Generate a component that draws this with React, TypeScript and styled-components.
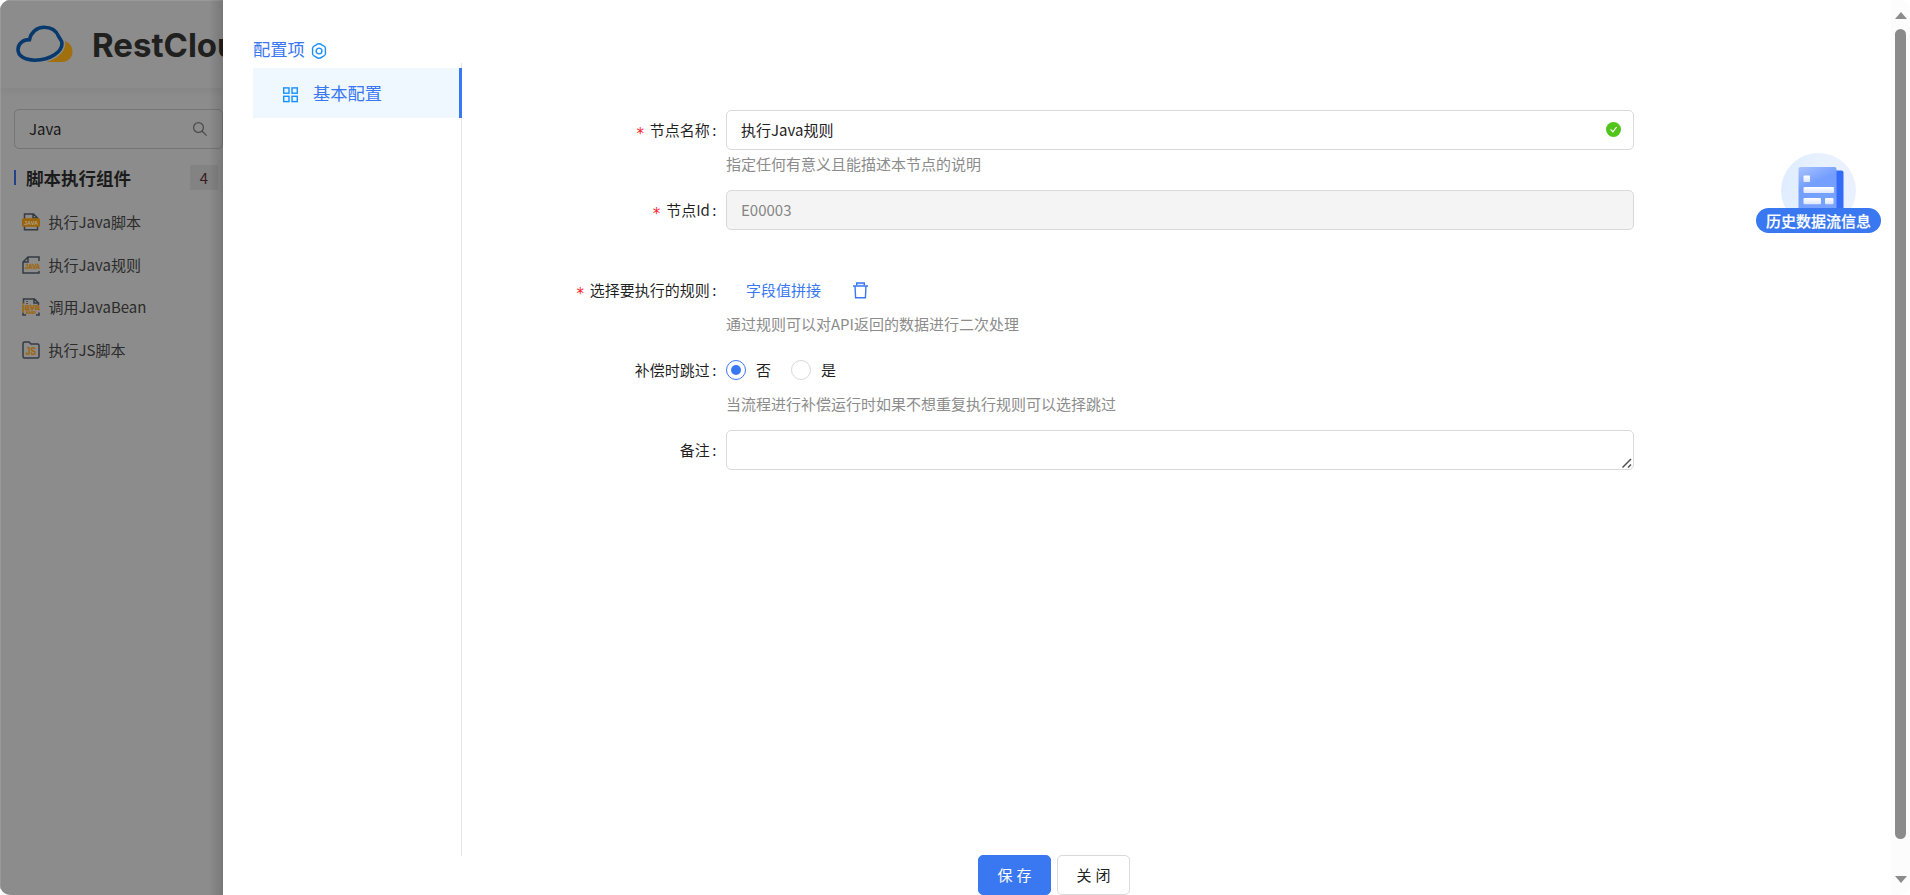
import React from 'react';
import styled, { createGlobalStyle, css } from 'styled-components';

const Global = createGlobalStyle`
  *, *::before, *::after { box-sizing: border-box; }
  body {
    margin: 0;
    overflow: hidden;
    background: #fff;
    font-family: "Noto Sans CJK SC", "Noto Sans", sans-serif;
    font-size: 15px;
    line-height: 22px;
    color: rgba(0, 0, 0, 0.88);
  }
  input, textarea, button { font: inherit; color: inherit; }
  svg { flex: none; }
`;

const Page = styled.div`
  display: flex;
  width: 1910px;
  height: 895px;
  border-radius: 10px;
  overflow: hidden;
`;

const Sidebar = styled.aside`
  position: relative;
  flex: 0 0 223px;
  overflow: hidden;
  background: #8c8c8c;
  box-shadow: inset 1px 0 0 #999, inset 0 1px 0 #999;
  &::after {
    content: '';
    position: absolute;
    inset: 0 0 0 auto;
    width: 14px;
    background: linear-gradient(to right, rgba(0, 0, 0, 0), rgba(0, 0, 0, 0.15));
  }
`;

const Brand = styled.header`
  display: flex;
  align-items: center;
  height: 88px;
  padding-left: 16px;
  box-shadow: 0 2px 8px rgba(0, 0, 0, 0.06);
  svg { margin-top: 1px; }
`;

const LogoText = styled.span`
  flex: 1;
  min-width: 0;
  margin: 2px 0 0 18px;
  overflow: hidden;
  font-family: Inter, sans-serif;
  font-size: 33px;
  font-weight: 700;
  line-height: 40px;
  color: #20201f;
  white-space: nowrap;
`;

const SearchBox = styled.label`
  display: flex;
  align-items: center;
  width: 209px;
  height: 40px;
  margin: 21px 0 0 14px;
  padding: 0 15px 0 14px;
  border: 1px solid #757575;
  border-radius: 5px;
`;

const SearchInput = styled.input`
  flex: 1;
  min-width: 0;
  padding: 0;
  border: 0;
  outline: 0;
  background: transparent;
  color: #161616;
`;

const GroupHeading = styled.div`
  display: flex;
  align-items: center;
  margin: 16px 5px 0 14px;
  height: 25px;
`;

const GroupBar = styled.span`
  width: 2px;
  height: 15px;
  background: #21438a;
`;

const GroupTitle = styled.strong`
  flex: 1;
  margin-left: 10px;
  font-size: 17.5px;
  line-height: 25px;
  color: #1b1b1b;
`;

const Count = styled.span`
  width: 28px;
  height: 25px;
  background: #838383;
  color: #371c1c;
  line-height: 26px;
  text-align: center;
`;

const ComponentList = styled.ul`
  display: grid;
  grid-auto-rows: 42.6px;
  margin: 11px 0 0;
  padding: 0 0 0 22px;
  list-style: none;
`;

const ComponentItem = styled.li`
  display: flex;
  align-items: center;
  gap: 8.5px;
  color: #2b2b2b;
  white-space: nowrap;
`;

const Drawer = styled.main`
  display: flex;
  flex-direction: column;
  flex: 1;
  min-width: 0;
  padding-left: 30px;
  background: #fff;
`;

const Columns = styled.div`
  display: flex;
  flex: 0 0 855px;
`;

const Nav = styled.nav`
  display: flex;
  flex-direction: column;
  width: 209px;
  padding-top: 36px;
  margin-bottom: -1px;
`;

const NavTitle = styled.div`
  display: flex;
  align-items: center;
  gap: 6px;
  height: 27px;
  padding-bottom: 2px;
  font-size: 17.3px;
  color: #3a78f2;
  svg { margin-top: 4px; }
`;

const NavBody = styled.div`
  flex: 1;
  padding-top: 5px;
  border-right: 1px solid #e4e4e4;
`;

const NavItem = styled.div`
  display: flex;
  align-items: center;
  gap: 14px;
  height: 50px;
  margin-right: -1px;
  padding-left: 29px;
  border-right: 3px solid #3a78f2;
  background: #eff7ff;
  color: #3a78f2;
  font-size: 17.3px;
  svg { margin-top: 3px; }
`;

const Form = styled.form`
  width: 1172px;
  padding-top: 110px;
`;

const Field = styled.div<{ $gap?: number }>`
  display: grid;
  grid-template-columns: 264px 908px;
  margin-bottom: ${(p) => p.$gap ?? 0}px;
`;

const Label = styled.label<{ $required?: boolean }>`
  display: flex;
  align-items: center;
  justify-content: flex-end;
  height: 40px;
  padding-right: 9.5px;
  ${(p) => p.$required && css`
    &::before {
      content: '*';
      margin: 8px 5px 0 0;
      color: #f5222d;
      font-family: "DejaVu Sans Mono", monospace;
    }
  `}
  &::after {
    content: ':';
    margin-left: 2.5px;
  }
`;

const control = css`
  width: 100%;
  height: 40px;
  border: 1px solid #d9d9d9;
  border-radius: 5px;
`;

const InputFrame = styled.div<{ $disabled?: boolean }>`
  ${control}
  display: flex;
  align-items: center;
  padding: 0 12px 0 14px;
  background: ${(p) => (p.$disabled ? '#f4f4f4' : '#fff')};
  color: ${(p) => (p.$disabled ? '#858585' : '#222')};
  svg { margin-bottom: 1px; }
`;

const TextInput = styled.input`
  flex: 1;
  padding: 0;
  border: 0;
  outline: 0;
  background: transparent;
`;

const TextAreaFrame = styled.div`
  position: relative;
  svg {
    position: absolute;
    right: 2px;
    bottom: 2px;
  }
`;

const TextArea = styled.textarea`
  ${control}
  display: block;
  padding: 8px 14px;
  outline: 0;
  resize: none;
  overflow: hidden;
`;

const Hint = styled.p`
  height: 28px;
  margin: 0;
  padding-top: 3px;
  line-height: 22px;
  color: #8c8c8c;
`;

const RuleRow = styled.div`
  display: flex;
  align-items: center;
  gap: 32px;
  height: 40px;
  padding-left: 20px;
  color: #3a78f2;
`;

const Radios = styled.div`
  display: flex;
  align-items: center;
  gap: 20px;
  height: 40px;
`;

const Radio = styled.span`
  display: flex;
  align-items: center;
  gap: 10px;
`;

const Dot = styled.span<{ $on?: boolean }>`
  display: grid;
  place-items: center;
  width: 20px;
  height: 20px;
  border: 1px solid ${(p) => (p.$on ? '#3a78f2' : '#d9d9d9')};
  border-radius: 50%;
  &::after {
    content: '';
    width: 10px;
    height: 10px;
    border-radius: 50%;
    background: ${(p) => (p.$on ? '#3a78f2' : 'transparent')};
  }
`;

const Footer = styled.footer`
  display: flex;
  gap: 6px;
  padding-left: 725px;
`;

const Button = styled.button<{ $primary?: boolean }>`
  width: 73px;
  height: 40px;
  padding: 0 0 0 4px;
  border: 1px solid ${(p) => (p.$primary ? '#3a78f2' : '#d9d9d9')};
  border-radius: 5px;
  background: ${(p) => (p.$primary ? '#3a78f2' : '#fff')};
  color: ${(p) => (p.$primary ? '#fff' : '#222')};
  letter-spacing: 4px;
`;

const HistoryButton = styled.div`
  position: absolute;
  top: 153px;
  left: 1756px;
  display: flex;
  flex-direction: column;
  align-items: center;
  width: 125px;
`;

const HistoryLabel = styled.span`
  width: 125px;
  height: 25px;
  margin-top: -20px;
  border-radius: 13px;
  background: #3a78f2;
  color: #fff;
  font-weight: 500;
  -webkit-text-stroke: 0.2px #fff;
  line-height: 26px;
  text-align: center;
`;

const ScrollTrack = styled.div`
  display: flex;
  flex-direction: column;
  align-items: center;
  flex: 0 0 19px;
  padding: 12px 0 11px;
  background: #fcfcfc;
`;

const ScrollThumb = styled.div`
  width: 11px;
  height: 810px;
  margin: 10px 0 37px;
  border-radius: 6px;
  background: #8b8b8b;
`;

const ScrollArrow = styled.span<{ $down?: boolean }>`
  border: solid transparent;
  border-width: 0 6.5px 7px;
  border-bottom-color: #8b8b8b;
  transform: ${(p) => (p.$down ? 'rotate(180deg)' : 'none')};
`;

const Logo = () => (
  <svg width="58" height="40" viewBox="0 0 58 40">
    <path d="M30 37h16c6 0 10.500-4.500 10.500-10.500S52.500 16.500 47 16c1 8-7 17-17 21z" fill="#a0700f" />
    <path d="M19 35.200C8 35.200 2 30.500 2 24.500 2 18.500 7 14.600 13.500 14.600 15 7 21 2.200 28 2.200c8 0 12.500 4 14.600 9.200.8 2 3.400 4 3.400 7 0 8-11 16.800-27 16.800z" fill="#8c8c8c" stroke="#8c8c8c" strokeWidth="6.500" />
    <path d="M19 35.200C8 35.200 2 30.500 2 24.500 2 18.500 7 14.600 13.500 14.600 15 7 21 2.200 28 2.200c8 0 12.500 4 14.600 9.200.8 2 3.400 4 3.400 7 0 8-11 16.800-27 16.800z" fill="#8c8c8c" stroke="#07396d" strokeWidth="3.600" />
  </svg>
);

const SearchIcon = () => (
  <svg width="14" height="14" viewBox="0 0 14 14" fill="none" stroke="#4b4b4b" strokeWidth="1.200">
    <circle cx="5.500" cy="5.500" r="4.900" />
    <path d="M9 9l4.600 4.600" />
  </svg>
);

type Kind = 'script' | 'rule' | 'bean' | 'js';

const FileIcon = ({ kind }: { kind: Kind }) => (
  <svg width="18" height="18" viewBox="0 0 18 18" fill="none" stroke="#333b43" strokeWidth="1.500" fontFamily="Liberation Sans, sans-serif" fontWeight="700">
    {kind === 'script' && (
      <>
        <path d="M2.500 6V1h9L15.500 5v1M2.500 13v3.700h13V13M11 1v4h4" />
        <rect x="0" y="5.200" width="18" height="8.600" rx="1.500" fill="#9c6408" stroke="none" />
        <text x="2" y="11.800" fontSize="6" textLength="14" lengthAdjust="spacingAndGlyphs" fill="#aaa08e" stroke="none">JAVA</text>
      </>
    )}
    {kind === 'rule' && (
      <>
        <path d="M17 5V1H6L1 6v11h16v-2M6 1v5H1" />
        <text x="3" y="12.900" fontSize="6.500" textLength="15" lengthAdjust="spacingAndGlyphs" fill="#a0660a" stroke="#a0660a" strokeWidth=".3">JAVA</text>
      </>
    )}
    {kind === 'bean' && (
      <>
        <path d="M1.500 6V1h11l4 4v2M12 1v4h4.500M1 14.500V17h3M14 17h3v-2.500" />
        <path d="M5 3v4" strokeDasharray="1 1" />
        <text x="0" y="11.700" fontSize="9" textLength="18" lengthAdjust="spacingAndGlyphs" fill="#a0660a" stroke="#a0660a" strokeWidth=".4">java</text>
        <text x="4" y="16" fontSize="4.500" textLength="10" lengthAdjust="spacingAndGlyphs" fill="#a0660a" stroke="#a0660a" strokeWidth=".2">Bean</text>
      </>
    )}
    {kind === 'js' && (
      <>
        <path d="M1 2.500Q1 1 2.500 1H7l2 2h6.500Q17 3 17 4.500v11Q17 17 15.500 17h-13Q1 17 1 15.500z" />
        <text x="3.800" y="14" fontSize="10.500" textLength="10.200" lengthAdjust="spacingAndGlyphs" fill="#a0660a" stroke="#a0660a" strokeWidth=".2">JS</text>
      </>
    )}
  </svg>
);

const SettingIcon = () => (
  <svg width="16" height="16" viewBox="0 0 16 16" fill="none" stroke="#1890ff" strokeWidth="1.400">
    <path d="M5.200 1.900Q8-.3 10.800 1.900L12.600 2.900Q14.700 3.800 14.500 6.200Q14.300 8 14.500 9.800Q14.700 12.200 12.600 13.100L10.800 14.100Q8 16.300 5.200 14.100L3.400 13.100Q1.300 12.200 1.500 9.800Q1.700 8 1.500 6.200Q1.300 3.800 3.400 2.900z" />
    <circle cx="8" cy="8" r="2.900" />
  </svg>
);

const AppsIcon = () => (
  <svg width="17" height="16" viewBox="0 0 17 16" fill="#e6f7ff" stroke="#1890ff" strokeWidth="1.400">
    <rect x="1.700" y=".9" width="5.300" height="5.300" />
    <rect x="10" y=".9" width="5.300" height="5.300" />
    <rect x="1.700" y="9.300" width="5.300" height="5.300" />
    <rect x="10" y="9.300" width="5.300" height="5.300" />
  </svg>
);

const TrashIcon = () => (
  <svg width="15" height="17" viewBox="0 0 15 17" fill="none" stroke="#3a78f2" strokeWidth="1.400">
    <path d="M3.700 3.500V1h7.600v2.500" fill="#dce8ff" />
    <path d="M0 4h15M2 4l.6 11.800h9.800L13 4" />
  </svg>
);

const CheckIcon = () => (
  <svg width="15" height="15" viewBox="0 0 15 15">
    <circle cx="7.500" cy="7.500" r="7.500" fill="#52c41a" />
    <path d="M4.600 7.400l2.300 2.500 3.700-4.900" fill="none" stroke="#fff" strokeWidth="1.200" />
  </svg>
);

const ResizeGrip = () => (
  <svg width="10" height="10" viewBox="0 0 10 10" fill="none" stroke="#505050" strokeWidth="1.500">
    <path d="M.5 9.500l8.500-8.500M6 9.500l3-3" />
  </svg>
);

const HistoryIcon = () => (
  <svg width="75" height="75" viewBox="0 0 75 75">
    <defs>
      <linearGradient id="halo" x1="0" y1="0" x2="1" y2=".3"><stop offset="0" stopColor="#dcecff" /><stop offset=".6" stopColor="#e9f1ff" /><stop offset="1" stopColor="#ebf0ff" /></linearGradient>
      <linearGradient id="sheet" x1="0" y1="0" x2=".4" y2="1"><stop offset="0" stopColor="#a8c2ff" /><stop offset=".45" stopColor="#739eff" /><stop offset="1" stopColor="#79a3ff" /></linearGradient>
      <linearGradient id="line" x1="0" y1="0" x2="0" y2="1"><stop offset="0" stopColor="#fff" /><stop offset="1" stopColor="#dce6ff" /></linearGradient>
    </defs>
    <circle cx="37.500" cy="37.500" r="37.500" fill="url(#halo)" />
    <rect x="45" y="17.500" width="17.500" height="44" rx="2" fill="#346cf9" />
    <rect x="17.500" y="14" width="38" height="46" rx="2" fill="url(#sheet)" />
    <g fill="url(#line)">
      <rect x="22.500" y="22.500" width="6.500" height="6.500" rx="1" />
      <rect x="22.500" y="34" width="30.500" height="6" rx="1" />
      <rect x="22.500" y="45" width="17.500" height="6.200" rx="1" />
      <rect x="44" y="45" width="8.500" height="6.200" rx="1" />
    </g>
  </svg>
);

const components: { kind: Kind; name: string }[] = [
  { kind: 'script', name: '执行Java脚本' },
  { kind: 'rule', name: '执行Java规则' },
  { kind: 'bean', name: '调用JavaBean' },
  { kind: 'js', name: '执行JS脚本' },
];

export default function App() {
  return (
    <>
      <Global />
      <Page>
        <Sidebar>
          <Brand>
            <Logo />
            <LogoText>RestCloud</LogoText>
          </Brand>
          <SearchBox>
            <SearchInput defaultValue="Java" />
            <SearchIcon />
          </SearchBox>
          <GroupHeading>
            <GroupBar />
            <GroupTitle>脚本执行组件</GroupTitle>
            <Count>4</Count>
          </GroupHeading>
          <ComponentList>
            {components.map((c) => (
              <ComponentItem key={c.kind}>
                <FileIcon kind={c.kind} />
                {c.name}
              </ComponentItem>
            ))}
          </ComponentList>
        </Sidebar>
        <Drawer>
          <Columns>
            <Nav>
              <NavTitle>配置项<SettingIcon /></NavTitle>
              <NavBody>
                <NavItem><AppsIcon />基本配置</NavItem>
              </NavBody>
            </Nav>
            <Form>
              <Field $gap={12}>
                <Label $required>节点名称</Label>
                <div>
                  <InputFrame>
                    <TextInput defaultValue="执行Java规则" />
                    <CheckIcon />
                  </InputFrame>
                  <Hint>指定任何有意义且能描述本节点的说明</Hint>
                </div>
              </Field>
              <Field $gap={40}>
                <Label $required>节点Id</Label>
                <InputFrame $disabled>
                  <TextInput defaultValue="E00003" readOnly />
                </InputFrame>
              </Field>
              <Field $gap={12}>
                <Label $required>选择要执行的规则</Label>
                <div>
                  <RuleRow>字段值拼接<TrashIcon /></RuleRow>
                  <Hint>通过规则可以对API返回的数据进行二次处理</Hint>
                </div>
              </Field>
              <Field $gap={12}>
                <Label>补偿时跳过</Label>
                <div>
                  <Radios>
                    <Radio><Dot $on />否</Radio>
                    <Radio><Dot />是</Radio>
                  </Radios>
                  <Hint>当流程进行补偿运行时如果不想重复执行规则可以选择跳过</Hint>
                </div>
              </Field>
              <Field>
                <Label>备注</Label>
                <TextAreaFrame>
                  <TextArea />
                  <ResizeGrip />
                </TextAreaFrame>
              </Field>
            </Form>
          </Columns>
          <Footer>
            <Button $primary type="button">保存</Button>
            <Button type="button">关闭</Button>
          </Footer>
        </Drawer>
        <ScrollTrack>
          <ScrollArrow />
          <ScrollThumb />
          <ScrollArrow $down />
        </ScrollTrack>
        <HistoryButton>
          <HistoryIcon />
          <HistoryLabel>历史数据流信息</HistoryLabel>
        </HistoryButton>
      </Page>
    </>
  );
}
